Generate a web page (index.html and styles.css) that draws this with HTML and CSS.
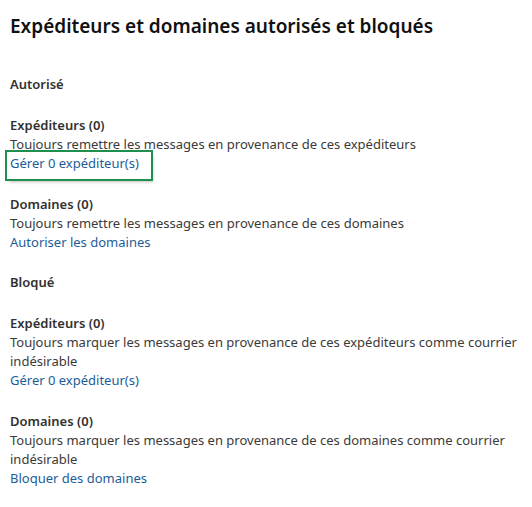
FILE: index.html
```html
<!DOCTYPE html>
<html lang="fr">
<head>
    <meta charset="UTF-8">
    <meta name="viewport" content="width=device-width, initial-scale=1.0">
    <title>Expéditeurs et domaines autorisés et bloqués</title>
    <link rel="stylesheet" href="styles.css">
</head>
<body>
    <div class="settings-page">
        <h1 class="page-title">Expéditeurs et domaines autorisés et bloqués</h1>

        <div class="group">
            <h2 class="group-title">Autorisé</h2>

            <div class="setting">
                <div class="setting-title">Expéditeurs (0)</div>
                <div class="setting-desc">Toujours remettre les messages en provenance de ces expéditeurs</div>
                <a class="setting-link highlighted" href="#">Gérer 0 expéditeur(s)</a>
            </div>

            <div class="setting">
                <div class="setting-title">Domaines (0)</div>
                <div class="setting-desc">Toujours remettre les messages en provenance de ces domaines</div>
                <a class="setting-link" href="#">Autoriser les domaines</a>
            </div>
        </div>

        <div class="group">
            <h2 class="group-title">Bloqué</h2>

            <div class="setting">
                <div class="setting-title">Expéditeurs (0)</div>
                <div class="setting-desc">Toujours marquer les messages en provenance de ces expéditeurs comme courrier indésirable</div>
                <a class="setting-link" href="#">Gérer 0 expéditeur(s)</a>
            </div>

            <div class="setting">
                <div class="setting-title">Domaines (0)</div>
                <div class="setting-desc">Toujours marquer les messages en provenance de ces domaines comme courrier indésirable</div>
                <a class="setting-link" href="#">Bloquer des domaines</a>
            </div>
        </div>
    </div>
</body>
</html>
```

FILE: styles.css
```css
body {
    font-family: "Noto Sans", "Open Sans", sans-serif;
    background-color: #fff;
    color: #323130;
    margin: 0;
}
.settings-page {
    padding: 12px 0 20px 10px;
    width: 522px;
}
.page-title {
    font-size: 19px;
    font-weight: 600;
    color: #111;
    margin: 0 0 34px 0;
    line-height: 28px;
}
.group {
    margin-bottom: 20px;
}
.group-title {
    font-size: 13px;
    font-weight: 600;
    color: #323130;
    margin: 0 0 22px 0;
    line-height: 20px;
}
.setting {
    font-size: 13px;
    line-height: 19px;
}
.setting + .setting {
    margin-top: 22px;
}
.setting-title {
    font-weight: 600;
}
.setting-desc {
    color: #3b3a39;
}
.setting-link {
    display: inline-block;
    color: #1c5d99;
    text-decoration: none;
}
.setting-link.highlighted {
    outline: 2px solid #1f8f4e;
    padding: 2px 12px 6px 3px;
    margin: -2px 0 -6px -3px;
    box-shadow: 2px 3px 3px rgba(0, 0, 0, 0.25);
}
```
